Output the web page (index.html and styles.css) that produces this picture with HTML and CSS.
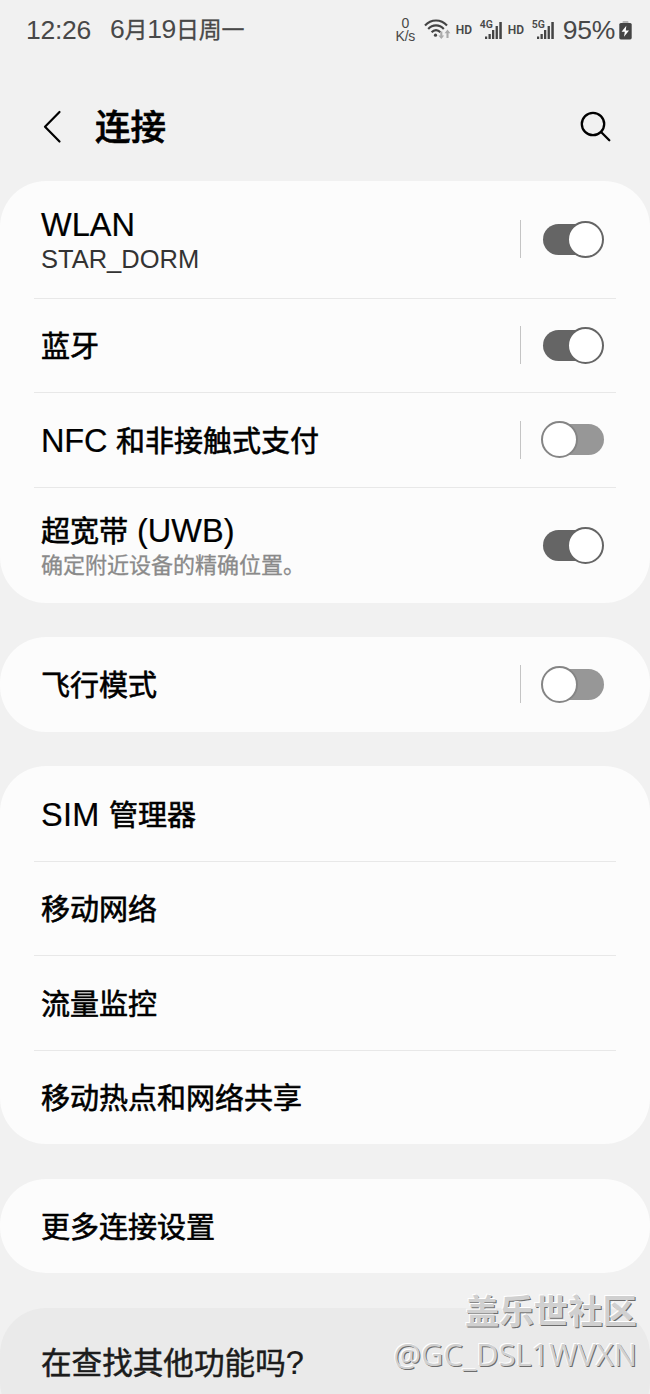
FILE: index.html
```html
<!DOCTYPE html>
<html lang="zh-CN">
<head>
    <meta charset="UTF-8">
    <meta name="viewport" content="width=device-width, initial-scale=1.0">
    <title>连接</title>
    <link rel="stylesheet" href="styles.css">
</head>
<body>
    <div class="screen">
        <div class="status-bar">
            <div class="time">12:26</div>
            <div class="date">6<span class="cn">月</span>19<span class="cn">日周一</span></div>
            <div class="status-icons">
                <div class="speed"><span>0</span><span>K/s</span></div>
                <svg class="wifi" width="28" height="24" viewBox="0 0 28 24" fill="none" stroke="#444" stroke-width="2.1">
                    <path d="M1 7.5C7 0.8 17 0.8 23 7.5M4.2 11C8.5 6.2 15.5 6.2 19.8 11M7.6 14.3C10.2 11.4 13.8 11.4 16.4 14.3"/>
                    <circle cx="11.5" cy="17.2" r="1.6" fill="#444" stroke="none"/>
                    <path d="M17.3 13.5v6M23.5 20v-6" stroke="#aaa"/>
                    <path d="M14.4 17.5h5.8l-2.9 3.6zM20.6 15.2h5.8l-2.9-3.6z" fill="#aaa" stroke="none"/>
                </svg>
                <span class="hd">HD</span>
                <div class="signal">
                    <span class="net">4G</span>
                    <svg width="24" height="19" viewBox="0 0 24 19" fill="#444">
                        <path d="M5 15.5h2.2v2.5h-2.2zM8.5 13h2.3v5H8.5zM12 9h2.3v9h-2.3zM15.6 5h2.3v13h-2.3zM19.3 1h2.5v17h-2.5z"/>
                    </svg>
                </div>
                <span class="hd">HD</span>
                <div class="signal">
                    <span class="net">5G</span>
                    <svg width="24" height="19" viewBox="0 0 24 19" fill="#444">
                        <path d="M5 15.5h2.2v2.5h-2.2zM8.5 13h2.3v5H8.5zM12 9h2.3v9h-2.3zM15.6 5h2.3v13h-2.3zM19.3 1h2.5v17h-2.5z"/>
                    </svg>
                </div>
                <span class="percent">95%</span>
                <svg class="battery" width="13" height="20" viewBox="0 0 13 20">
                    <path d="M3.5 3V2q0-1 1-1h4q1 0 1 1v1z" fill="#b5b5b5"/>
                    <rect x="0.3" y="3" width="12.4" height="16.4" rx="1.6" fill="#444"/>
                    <path d="M7.3 5.8L2.6 11.8H5.8L5 16.8L10 10.6H6.8z" fill="#fff"/>
                </svg>
            </div>
        </div>

        <div class="header">
            <svg class="back" width="20" height="34" viewBox="0 0 20 34" fill="none" stroke="#000" stroke-width="2.2" stroke-linecap="round" stroke-linejoin="round">
                <path d="M17.5 2L3 16.7L17.5 31.5"/>
            </svg>
            <h1>连接</h1>
            <svg class="search" width="32" height="32" viewBox="0 0 32 32" fill="none" stroke="#000" stroke-width="2.3" stroke-linecap="round">
                <circle cx="13" cy="13" r="11.2"/>
                <path d="M21.3 21.3L29.3 29.2"/>
            </svg>
        </div>

        <div class="card">
            <div class="row tall">
                <div class="label">
                    <div class="name"><span class="en">WLAN</span></div>
                    <div class="network">STAR_DORM</div>
                </div>
                <div class="divider"></div>
                <div class="switch on"></div>
            </div>
            <div class="row">
                <div class="name">蓝牙</div>
                <div class="divider"></div>
                <div class="switch on"></div>
            </div>
            <div class="row">
                <div class="name"><span class="en nfc">NFC </span>和非接触式支付</div>
                <div class="divider"></div>
                <div class="switch"></div>
            </div>
            <div class="row uwb">
                <div class="label">
                    <div class="name">超宽带<span class="en"> (UWB)</span></div>
                    <div class="desc">确定附近设备的精确位置。</div>
                </div>
                <div class="switch on"></div>
            </div>
        </div>

        <div class="card">
            <div class="row">
                <div class="name">飞行模式</div>
                <div class="divider"></div>
                <div class="switch"></div>
            </div>
        </div>

        <div class="card">
            <div class="row"><div class="name"><span class="en sim">SIM </span>管理器</div></div>
            <div class="row"><div class="name">移动网络</div></div>
            <div class="row"><div class="name">流量监控</div></div>
            <div class="row"><div class="name">移动热点和网络共享</div></div>
        </div>

        <div class="card">
            <div class="row"><div class="name">更多连接设置</div></div>
        </div>

        <div class="card more">
            <div class="question">在查找其他功能吗<span class="en">?</span></div>
        </div>

        <div class="watermark">
            <div class="community">盖乐世社区</div>
            <div class="user">@GC_DSL1WVXN</div>
        </div>
    </div>
</body>
</html>
```

FILE: styles.css
```css
* {
    margin: 0;
    padding: 0;
    box-sizing: border-box;
}

body {
    font-family: "Liberation Sans", "Noto Sans CJK SC", sans-serif;
    background: #f1f1f1;
    color: #000;
}

.screen {
    position: relative;
    width: 650px;
    height: 1394px;
    overflow: hidden;
}

/* status bar */
.status-bar {
    display: flex;
    align-items: center;
    height: 60px;
    padding: 0 18px 0 26px;
    font-size: 26.5px;
    letter-spacing: -0.3px;
    color: #484848;
    white-space: nowrap;
}

.time {
    width: 84px;
}

.date {
    line-height: 30px;
    padding-bottom: 1px;
}

.date .cn {
    font-size: 23px;
    -webkit-text-stroke: 0.3px #484848;
}

.status-icons {
    display: flex;
    align-items: center;
    margin-left: auto;
}

.speed {
    display: flex;
    flex-direction: column;
    align-items: center;
    width: 21px;
    margin-right: 8px;
    font-size: 14px;
    line-height: 13px;
    letter-spacing: -0.2px;
}

.hd {
    width: 17px;
    font-family: Roboto, sans-serif;
    font-size: 12px;
    font-weight: 600;
    letter-spacing: 0;
}

.wifi {
    margin-right: 4px;
}

.signal {
    position: relative;
    width: 24px;
    height: 20px;
    margin: 2px 4px 0 7px;
}

.signal svg {
    display: block;
}

.net {
    position: absolute;
    left: 0;
    top: -1px;
    font-family: Roboto, sans-serif;
    font-size: 10.5px;
    line-height: 10px;
    font-weight: 600;
    letter-spacing: 0;
}

.percent {
    margin-left: 3px;
}

.battery {
    margin-left: 4px;
}

/* title */
.header {
    display: flex;
    align-items: center;
    height: 121px;
    padding: 12px 38px 0 42px;
}

.header h1 {
    margin-left: 33px;
    padding-top: 3px;
    font-size: 35.5px;
    font-weight: 500;
    line-height: 40px;
    -webkit-text-stroke: 0.6px #000;
}

.header .search {
    margin-left: auto;
}

/* cards */
.card {
    margin-bottom: 34.5px;
    padding: 0 34px;
    background: #fcfcfc;
    border-radius: 46px;
}

.row {
    display: flex;
    align-items: center;
    height: 94.5px;
    padding: 0 12px 0 7px;
}

.row + .row {
    border-top: 1.5px solid #e8e8e8;
}

.row.tall {
    height: 116.5px;
}

.row.uwb {
    height: 116px;
}

.name {
    padding-top: 4px;
    font-size: 29px;
    line-height: 38px;
    -webkit-text-stroke: 0.6px #000;
    white-space: pre;
}

.label .name {
    padding-top: 2px;
}

.tall .label .name {
    padding-top: 0;
}

.en {
    font-size: 32.5px;
    -webkit-text-stroke: 0.2px #000;
}

.en.nfc {
    letter-spacing: -0.2px;
}

.en.sim {
    letter-spacing: 0.3px;
}

.network {
    font-size: 25.5px;
    line-height: 28px;
    color: #333;
}

.desc {
    font-size: 22px;
    line-height: 30px;
    color: #8a8a8a;
    -webkit-text-stroke: 0.3px #8a8a8a;
}

.divider {
    width: 1px;
    height: 38px;
    margin-left: auto;
    background: #c4c4c4;
}

.switch {
    position: relative;
    width: 63px;
    height: 37px;
    margin-left: 20px;
}

.uwb .switch {
    margin-left: auto;
}

.switch::before {
    content: "";
    position: absolute;
    top: 3px;
    right: 0;
    width: 58px;
    height: 31px;
    border-radius: 16px;
    background: #979797;
}

.switch::after {
    content: "";
    position: absolute;
    top: 0;
    left: 0;
    width: 37px;
    height: 37px;
    box-sizing: border-box;
    border: 2px solid #858585;
    border-radius: 50%;
    background: #fff;
}

.switch.on::before {
    right: 3px;
    background: #656565;
}

.switch.on::after {
    left: 26px;
    border-color: #656565;
}

.card.more {
    height: 120px;
    margin-bottom: 0;
    padding: 35px 41px;
    background: #eaeaea;
}

.question {
    font-size: 30.6px;
    line-height: 40px;
    color: #1c1c1c;
    -webkit-text-stroke: 0.5px #1c1c1c;
}

/* watermark */
.watermark {
    position: absolute;
    right: 13px;
    bottom: 18px;
    text-align: right;
    color: #d0d0d0;
    white-space: nowrap;
    text-shadow: -1px -1px 0 #fff, 1px 1px 0 #6c6c6c;
}

.community {
    font-family: "Noto Sans CJK SC", sans-serif;
    font-size: 34.4px;
    font-weight: 700;
    line-height: 46px;
}

.user {
    font-family: "Open Sans", sans-serif;
    font-size: 30.8px;
    line-height: 44px;
}
```
